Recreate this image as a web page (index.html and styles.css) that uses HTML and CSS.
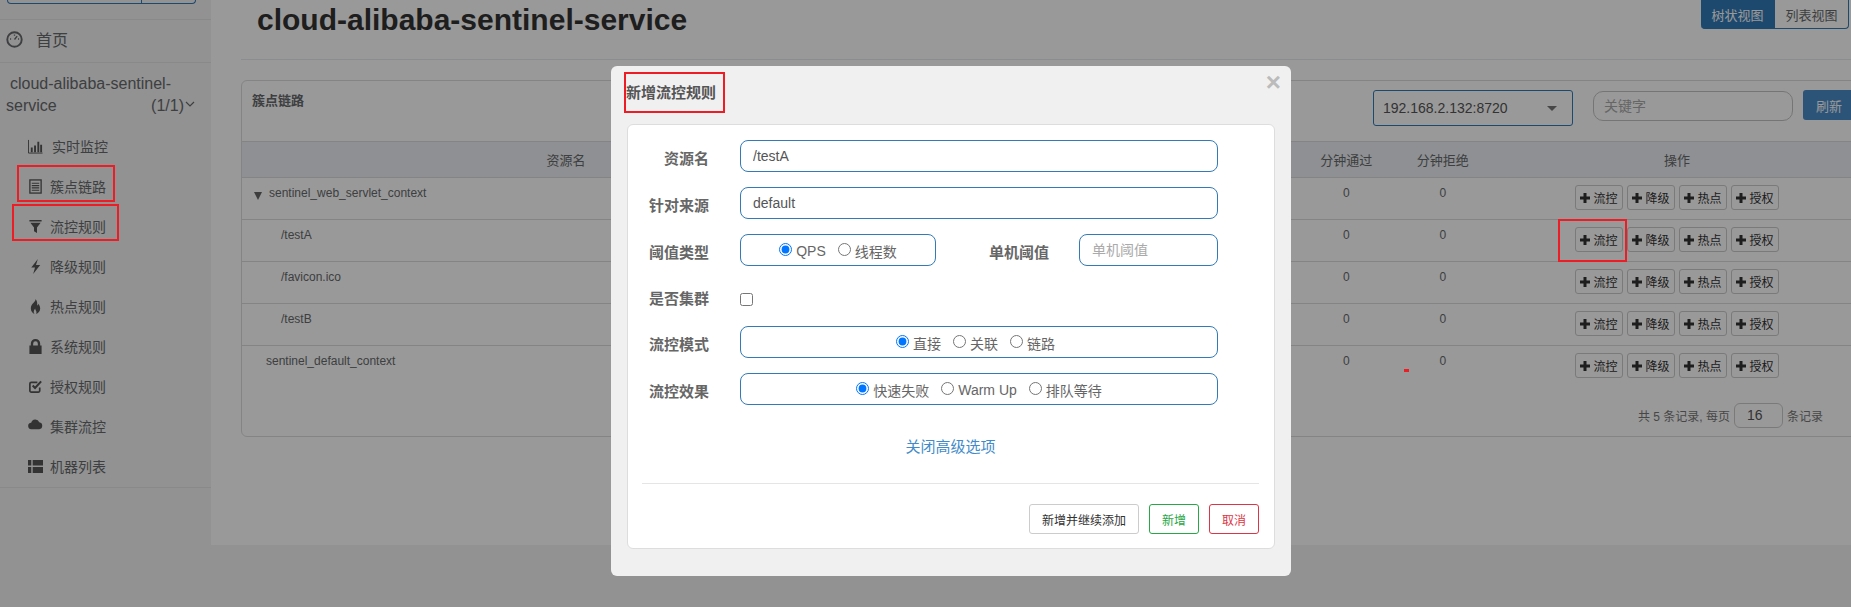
FILE: index.html
```html
<!DOCTYPE html>
<html lang="zh-CN">
<head>
    <meta charset="UTF-8">
    <title>Sentinel Dashboard</title>
    <link rel="stylesheet" href="styles.css">
</head>
<body>
    <aside class="sidebar">
        <div class="search-stub"><span class="search-stub-btn"></span></div>
        <a class="home-link">
            <svg class="home-icon" viewBox="0 0 16 16"><circle cx="8" cy="8" r="6.8" fill="none" stroke="currentColor" stroke-width="1.8"/><path d="M8 8 10.500 4.800M3.800 7.500h1M11.300 7.500h1M8 3.400v1" stroke="currentColor" stroke-width="1.300" fill="none"/></svg>
            首页
        </a>
        <div class="app-name">
            <div class="app-name-first">cloud-alibaba-sentinel-</div>
            <div class="app-name-second">
                <span>service</span>
                <span class="app-count">(1/1)<svg class="chevron" viewBox="0 0 10 6"><path d="M1 1l4 4 4-4" fill="none" stroke="currentColor" stroke-width="1.200"/></svg></span>
            </div>
        </div>
        <nav class="side-nav">
            <a class="side-item side-item-first">
                <svg viewBox="0 0 16 16"><path d="M.5 1v14h15" fill="none" stroke="currentColor" stroke-width="1"/><path d="M3 9h2v5H3zM6.500 7h2v7h-2zM10 3h2v11h-2zM13 6h2v8h-2z" fill="currentColor"/></svg>
                实时监控
            </a>
            <a class="side-item">
                <svg viewBox="0 0 16 16"><rect x="2" y="1" width="12" height="14" fill="none" stroke="currentColor" stroke-width="1.400"/><path d="M4 4.500h8M4 7h8M4 9.500h8M4 12h8" stroke="currentColor" stroke-width="1.200"/></svg>
                簇点链路
            </a>
            <a class="side-item">
                <svg viewBox="0 0 16 16"><path d="M1.500 1h13v1.600h-13zM2.500 4h11L9.600 9v6l-3.200-2V9z" fill="currentColor"/></svg>
                流控规则
            </a>
            <a class="side-item">
                <svg viewBox="0 0 16 16"><path d="M10.500 0 3.500 9h4l-2 7 7.500-9.500H8.500z" fill="currentColor"/></svg>
                降级规则
            </a>
            <a class="side-item">
                <svg viewBox="0 0 16 16"><path d="M8 0c.6 3-5 5-5 10 0 3 2 5.300 4 6-1.200-1.600-1.400-3.400.6-6 .2 2 2.400 3.400 1 6 2.200-.8 4.400-3 4.400-6 0-2.400-1.200-3.600-1.800-5-.4 1-.8 1.600-1.400 2C10 4.500 9.800 1.800 8 0z" fill="currentColor"/></svg>
                热点规则
            </a>
            <a class="side-item">
                <svg viewBox="0 0 16 16"><path d="M1.500 7H3V5a5 5 0 0 1 10 0v2h1.500v9h-13zM5.500 7h5V5a2.500 2.500 0 0 0-5 0z" fill="currentColor"/></svg>
                系统规则
            </a>
            <a class="side-item">
                <svg viewBox="0 0 16 16"><path d="M12.500 9v3.500a1.500 1.500 0 0 1-1.500 1.500H3.500A1.500 1.500 0 0 1 2 12.500V5a1.500 1.500 0 0 1 1.500-1.500H10" fill="none" stroke="currentColor" stroke-width="1.800"/><path d="M5 7l2.500 2.500L14 2.500" fill="none" stroke="currentColor" stroke-width="2.200"/></svg>
                授权规则
            </a>
            <a class="side-item">
                <svg viewBox="0 0 16 16"><path d="M4 11a3.500 3.500 0 0 1-.6-7A4.500 4.500 0 0 1 12 3.500 3.800 3.800 0 0 1 12 11z" fill="currentColor"/></svg>
                集群流控
            </a>
            <a class="side-item">
                <svg viewBox="0 0 16 16"><path d="M0 1h3.500v6H0zM5 1h11v6H5zM0 8.500h3.500V15H0zM5 8.500h11V15H5z" fill="currentColor"/></svg>
                机器列表
            </a>
        </nav>
    </aside>

    <main class="content">
        <header class="page-head">
            <h1>cloud-alibaba-sentinel-service</h1>
            <div class="view-switch">
                <button class="view-btn view-btn-on">树状视图</button>
                <button class="view-btn">列表视图</button>
            </div>
        </header>

        <section class="panel">
            <div class="panel-head">
                <span class="panel-title">簇点链路</span>
                <div class="panel-tools">
                    <div class="machine-select">192.168.2.132:8720<span class="caret"></span></div>
                    <input class="keyword" type="text" placeholder="关键字">
                    <button class="refresh">刷新</button>
                </div>
            </div>
            <table class="res-table">
                <colgroup>
                    <col class="col-name"><col class="col-num"><col class="col-num"><col class="col-num"><col class="col-num">
                    <col class="col-min"><col class="col-min"><col class="col-ops">
                </colgroup>
                <thead>
                    <tr><th>资源名</th><th>通过QPS</th><th>拒绝QPS</th><th>并发数</th><th>平均RT</th><th>分钟通过</th><th>分钟拒绝</th><th>操作</th></tr>
                </thead>
                <tbody id="res-rows"></tbody>
            </table>
            <div class="pager">
                共 5 条记录, 每页 <input class="page-size" type="text" value="16"> 条记录
            </div>
        </section>
    </main>

    <div class="backdrop">
        <div class="dialog">
            <span class="dialog-close">×</span>
            <div class="dialog-title">新增流控规则</div>
            <form class="dialog-card">
                <div class="form-row">
                    <label class="form-label">资源名</label>
                    <input class="form-input" type="text" value="/testA">
                </div>
                <div class="form-row">
                    <label class="form-label">针对来源</label>
                    <input class="form-input" type="text" value="default">
                </div>
                <div class="form-row">
                    <label class="form-label">阈值类型</label>
                    <div class="radio-box radio-box-short">
                        <label><input type="radio" name="grade" checked>QPS</label>
                        <label><input type="radio" name="grade">线程数</label>
                    </div>
                    <label class="form-label form-label-wide">单机阈值</label>
                    <input class="form-input form-input-short" type="text" placeholder="单机阈值">
                </div>
                <div class="form-row form-row-check">
                    <label class="form-label">是否集群</label>
                    <input class="cluster-check" type="checkbox">
                </div>
                <div class="form-row">
                    <label class="form-label">流控模式</label>
                    <div class="radio-box radio-box-mode">
                        <label><input type="radio" name="mode" checked>直接</label>
                        <label><input type="radio" name="mode">关联</label>
                        <label><input type="radio" name="mode">链路</label>
                    </div>
                </div>
                <div class="form-row">
                    <label class="form-label">流控效果</label>
                    <div class="radio-box">
                        <label><input type="radio" name="effect" checked>快速失败</label>
                        <label><input type="radio" name="effect">Warm Up</label>
                        <label><input type="radio" name="effect">排队等待</label>
                    </div>
                </div>
                <a class="advanced-link">关闭高级选项</a>
                <hr class="dialog-line">
                <div class="dialog-foot">
                    <button class="foot-btn" type="button">新增并继续添加</button>
                    <button class="foot-btn foot-btn-ok" type="button">新增</button>
                    <button class="foot-btn foot-btn-no" type="button">取消</button>
                </div>
            </form>
        </div>
    </div>

    <!-- red marks drawn on top of the screenshot -->
    <span class="mark mark-chain"></span>
    <span class="mark mark-flow"></span>
    <span class="mark mark-title"></span>
    <span class="mark mark-btn"></span>
    <span class="mark-dot"></span>

    <script>
        const rows = [
            { name: "sentinel_web_servlet_context", cls: "res-root" },
            { name: "/testA", cls: "res-child" },
            { name: "/favicon.ico", cls: "res-child" },
            { name: "/testB", cls: "res-child" },
            { name: "sentinel_default_context", cls: "res-plain" },
        ];
        const plus = '<svg class="plus" viewBox="0 0 10 10"><path d="M3.500 0h3v3.500H10v3H6.500V10h-3V6.500H0v-3h3.500z" fill="currentColor"/></svg>';
        const ops = ["流控", "降级", "热点", "授权"]
            .map((op) => `<button class="op-btn">${plus}${op}</button>`)
            .join("");

        document.getElementById("res-rows").innerHTML = rows
            .map((r) => `<tr>
                <td class="${r.cls}">${r.name}</td>
                <td>0</td><td>0</td><td>0</td><td>0</td><td>0</td><td>0</td>
                <td class="ops">${ops}</td>
            </tr>`)
            .join("");
    </script>
</body>
</html>
```

FILE: styles.css
```css
* {
    box-sizing: border-box;
}

html, body {
    height: 100%;
}

body {
    font-family: "Liberation Sans", "Noto Sans CJK SC", sans-serif;
    background: #f3f3f4;
    color: #676a6c;
    margin: 0;
    display: flex;
    align-items: flex-start;
    overflow: hidden;
    position: relative;
}

/* sidebar */
.sidebar {
    width: 211px;
    flex-shrink: 0;
}

.search-stub {
    height: 4px;
    margin: 0 15px 15px 7px;
    border: 1px solid #337ab7;
    border-top: none;
    border-radius: 0 0 5px 5px;
    display: flex;
    justify-content: flex-end;
}

.search-stub-btn {
    width: 54px;
    border-left: 1px solid #337ab7;
}

.home-link {
    height: 44px;
    border-top: 1px solid #e4e4e4;
    border-bottom: 1px solid #e4e4e4;
    display: flex;
    align-items: center;
    gap: 13px;
    padding: 0 0 4px 6px;
    font-size: 16px;
}

.home-icon {
    width: 17px;
    height: 17px;
}

.app-name {
    font-size: 16px;
    line-height: 22px;
    padding: 10px 16px 0 6px;
    height: 64px;
}

.app-name-first {
    padding-left: 4px;
}

.app-name-second {
    display: flex;
    justify-content: space-between;
}

.chevron {
    width: 10px;
    height: 6px;
    margin-left: 1px;
    vertical-align: 4px;
}

.side-nav {
    border-bottom: 1px solid #e4e4e4;
}

.side-item {
    height: 40px;
    display: flex;
    align-items: center;
    gap: 7px;
    padding: 0 0 2px 28px;
    font-size: 14px;
}

.side-item svg {
    width: 15px;
    height: 15px;
    color: #555;
}

.side-item-first {
    gap: 9px;
}

/* main area */
.content {
    flex: 1;
    min-width: 0;
    height: 545px;
    background: #fff;
    padding-left: 30px;
}

.page-head {
    height: 60px;
    border-bottom: 1px solid #e7eaec;
    display: flex;
    justify-content: space-between;
    align-items: flex-start;
    padding: 0 2px 0 16px;
}

.page-head h1 {
    margin: 3px 0 0;
    font-size: 30px;
    line-height: 34px;
    color: #333;
}

.view-switch {
    display: flex;
}

.view-btn {
    width: 74px;
    height: 29px;
    font-family: inherit;
    font-size: 13px;
    color: #676a6c;
    background: #fff;
    border: 1px solid #337ab7;
    border-top: none;
    border-left: none;
    border-radius: 0 0 4px 0;
}

.view-btn-on {
    color: #fff;
    background: #337ab7;
    border-radius: 0 0 0 4px;
}

.panel {
    width: 1623px;
    height: 357px;
    margin-top: 20px;
    border: 1px solid #ddd;
    border-radius: 6px;
    background: #fff;
}

.panel-head {
    height: 60px;
    display: flex;
    justify-content: space-between;
    padding: 9px 0 0 10px;
}

.panel-title {
    font-size: 13px;
    font-weight: bold;
    line-height: 20px;
    margin-top: 1px;
}

.panel-tools {
    display: flex;
    align-items: flex-start;
    gap: 20px;
}

.machine-select {
    width: 200px;
    height: 36px;
    border: 1px solid #337ab7;
    border-radius: 3px;
    padding-left: 9px;
    font-size: 14px;
    line-height: 34px;
    color: #555;
    position: relative;
}

.caret {
    position: absolute;
    right: 15px;
    top: 15px;
    border: 5px solid transparent;
    border-top-color: #777;
    border-bottom: none;
}

.keyword {
    width: 200px;
    height: 30px;
    margin-top: 1px;
    border: 1px solid #c4c4c4;
    border-radius: 10px;
    padding: 0 10px;
    font-family: inherit;
    font-size: 14px;
}

.keyword::placeholder,
.form-input::placeholder {
    color: #aaa;
}

.refresh {
    width: 60px;
    height: 30px;
    margin-left: -10px;
    border: none;
    border-radius: 3px;
    background: #4a8cc8;
    color: #fff;
    font-family: inherit;
    font-size: 13px;
    text-align: left;
    padding-left: 13px;
}

.res-table {
    width: 100%;
    table-layout: fixed;
    border-collapse: collapse;
    font-size: 12px;
}

.col-name { width: 648px; }
.col-num { width: 102px; }
.col-min { width: 96.500px; }

.res-table th {
    height: 36px;
    background: #eef1f5;
    border-top: 1px solid #ddd;
    border-bottom: 1px solid #ddd;
    font-size: 13px;
    font-weight: normal;
}

.res-table td {
    height: 42px;
    padding: 7px 0 0;
    text-align: center;
    vertical-align: top;
    border-bottom: 1px solid #ddd;
    line-height: 16px;
}

.res-table tr:last-child td {
    border-bottom: none;
}

.res-table td.res-root {
    text-align: left;
    padding-left: 27px;
    position: relative;
}

.res-root::before {
    content: "";
    position: absolute;
    left: 12px;
    top: 14px;
    border: 4px solid transparent;
    border-top: 8px solid #666;
    border-bottom: none;
}

.res-table td.res-child {
    text-align: left;
    padding-left: 39px;
}

.res-table td.res-plain {
    text-align: left;
    padding-left: 24px;
}

.res-table td.ops {
    padding-top: 7px;
}

.op-btn {
    display: inline-flex;
    align-items: center;
    justify-content: center;
    vertical-align: top;
    gap: 3px;
    width: 48px;
    height: 25px;
    margin: 0 2px;
    padding: 0;
    background: #fff;
    border: 1px solid #ccc;
    border-radius: 3px;
    color: #333;
    font-family: inherit;
    font-size: 12px;
}

.plus {
    width: 10px;
    height: 10px;
}

.pager {
    display: flex;
    justify-content: flex-end;
    align-items: center;
    gap: 4px;
    padding-right: 40px;
    margin-top: 15px;
    font-size: 12px;
    color: #777;
}

.page-size {
    width: 49px;
    height: 25px;
    border: 1px solid #ccc;
    border-radius: 6px;
    padding-left: 12px;
    font-family: inherit;
    font-size: 14px;
    color: #555;
}

/* dialog */
.backdrop {
    position: absolute;
    inset: 0;
    background: rgba(0, 0, 0, 0.4);
}

.dialog {
    width: 680px;
    height: 510px;
    margin: 66px 0 0 611px;
    padding: 0 16px;
    background: #f0f0f0;
    border-radius: 6px;
    position: relative;
}

.dialog-close {
    position: absolute;
    right: 10px;
    top: 3px;
    font-size: 26px;
    line-height: 26px;
    font-weight: bold;
    color: #bbb;
}

.dialog-title {
    height: 58px;
    margin-left: -1px;
    padding-top: 16px;
    font-size: 15px;
    line-height: 22px;
    font-weight: bold;
    color: #555;
}

.dialog-card {
    height: 425px;
    padding: 15px 15px 0 14px;
    background: #fff;
    border: 1px solid #ddd;
    border-radius: 6px;
}

.form-row {
    display: flex;
    align-items: center;
    height: 32px;
    margin-bottom: 15px;
}

.form-row-check {
    height: 30px;
}

.form-label {
    width: 67px;
    margin-right: 31px;
    padding-top: 3px;
    flex-shrink: 0;
    text-align: right;
    font-size: 15px;
    font-weight: bold;
    color: #666;
}

.form-label-wide {
    width: 113px;
    margin-right: 30px;
}

.form-input {
    width: 478px;
    height: 32px;
    padding: 0 12px;
    border: 1px solid #337ab7;
    border-radius: 8px;
    font-family: inherit;
    font-size: 14px;
    color: #555;
}

.form-input-short {
    width: 139px;
}

.radio-box {
    width: 478px;
    height: 32px;
    border: 1px solid #337ab7;
    border-radius: 8px;
    display: flex;
    justify-content: center;
    align-items: center;
    gap: 12px;
    font-size: 14px;
    color: #666;
}

.radio-box-short {
    width: 196px;
}

.radio-box-mode {
    padding-right: 7px;
}

.radio-box label {
    display: flex;
    align-items: center;
    padding-top: 2px;
}

.radio-box input {
    margin: 0 4px 4px 0;
}

.cluster-check {
    margin: 7px 0 0;
    width: 13px;
    height: 13px;
}

.advanced-link {
    display: block;
    margin-top: 31px;
    text-align: center;
    font-size: 15px;
    line-height: 22px;
    color: #428bca;
}

.dialog-line {
    margin: 25px 0 20px;
    border: none;
    border-top: 1px solid #e5e5e5;
}

.dialog-foot {
    display: flex;
    justify-content: flex-end;
    gap: 10px;
}

.foot-btn {
    height: 30px;
    width: 50px;
    padding: 0;
    background: #fff;
    border: 1px solid #ccc;
    border-radius: 3px;
    font-family: inherit;
    font-size: 12px;
    color: #333;
}

.foot-btn:first-child {
    width: 110px;
}

.foot-btn-ok {
    border-color: #28a745;
    color: #28a745;
}

.foot-btn-no {
    border-color: #dc3545;
    color: #dc3545;
}

/* annotations */
.mark {
    position: absolute;
    border: 2px solid #ee1c25;
}

.mark-chain { left: 17px; top: 165px; width: 98px; height: 37px; }
.mark-flow { left: 12px; top: 204px; width: 107px; height: 37px; }
.mark-title { left: 624px; top: 72px; width: 101px; height: 41px; }
.mark-btn { left: 1558px; top: 219px; width: 69px; height: 43px; }

.mark-dot {
    position: absolute;
    left: 1404px;
    top: 369px;
    width: 5px;
    height: 3px;
    background: #ee1c25;
}
```
